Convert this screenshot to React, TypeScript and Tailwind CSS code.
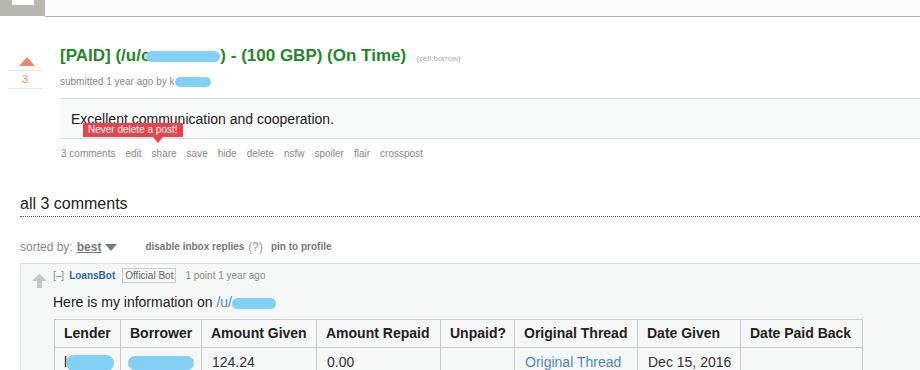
import React from "react";

const LINKS = ["3 comments", "edit", "share", "save", "hide", "delete", "nsfw", "spoiler", "flair", "crosspost"];

const COLUMNS: Array<{ label: string; width: string }> = [
  { label: "Lender", width: "w-[66px]" },
  { label: "Borrower", width: "w-[81px]" },
  { label: "Amount Given", width: "w-[115px]" },
  { label: "Amount Repaid", width: "w-[124px]" },
  { label: "Unpaid?", width: "w-[74px]" },
  { label: "Original Thread", width: "w-[123px]" },
  { label: "Date Given", width: "w-[103px]" },
  { label: "Date Paid Back", width: "w-[122px]" },
];

function Blob({ className }: { className: string }) {
  return <span className={`inline-block rounded-full bg-[#82d0f6] align-middle ${className}`} />;
}

function PostVote() {
  return (
    <div className="flex w-[60px] shrink-0 flex-col items-start pl-[8px] pt-[11px]">
      <svg width="16" height="9" viewBox="0 0 16 9" className="ml-[11px]">
        <polygon points="8,0 16,9 0,9" fill="#f2866a" />
      </svg>
      <div className="mt-[4px] h-[19px] w-[34px] border-y border-[#e6e6e6] text-center text-[11px] leading-[17px] text-[#e5896c]">
        3
      </div>
    </div>
  );
}

function CommentArrow() {
  return (
    <svg width="15" height="14" viewBox="0 0 15 14">
      <polygon points="7.5,0 15,7 10,7 10,14 5,14 5,7 0,7" fill="#c6c6c6" />
    </svg>
  );
}

export default function App() {
  return (
    <div className="h-[370px] w-[920px] overflow-hidden bg-white font-['Liberation_Sans',Arial,sans-serif] text-[#222]">
      {/* top bar */}
      <div className="flex h-[17px]">
        <div className="h-[16px] w-[45px] bg-[#b9b7b1] pl-[12px]">
          <div className="h-[5px] w-[22px] bg-white" />
        </div>
        <div className="h-[17px] flex-1 border-b border-[#b3b3b3] bg-[#fafafa]" />
      </div>

      {/* post */}
      <div className="mt-[29px] flex">
        <PostVote />
        <div className="relative flex-1">
          <div className="flex items-baseline">
            <span className="text-[17px] font-bold leading-[20px] text-[#23882a]">
              [PAID] (/u/c
              <Blob className="-ml-[4px] h-[11px] w-[74px]" />) - (100 GBP) (On Time)
            </span>
            <span className="ml-[10px] text-[8px] text-[#aaa]">(self.borrow)</span>
          </div>
          <div className="mt-[9px] text-[10px] leading-[14px] text-[#888]">
            submitted 1 year ago by k<Blob className="h-[10px] w-[36px]" />
          </div>
          <div className="mt-[9px] h-[41px] border-y border-[#dcdcdc] bg-[#f8f9f9] pl-[11px] pt-[11px] text-[14px] leading-[18px] text-[#222]">
            Excellent communication and cooperation.
          </div>
          <div className="mt-[8px] flex gap-[10px] pl-[1px] text-[10px] leading-[14px] text-[#888]">
            {LINKS.map((l) => (
              <span key={l}>{l}</span>
            ))}
          </div>
          {/* tooltip */}
          <div className="absolute left-[23px] top-[77px] flex flex-col items-start">
            <div className="h-[14px] bg-[#e8424c] px-[5px] text-[10px] leading-[14px] text-white">Never delete a post!</div>
            <svg width="10" height="6" viewBox="0 0 10 6" className="ml-[70px]">
              <polygon points="0,0 10,0 5,6" fill="#e8424c" />
            </svg>
          </div>
        </div>
      </div>

      {/* comments heading */}
      <div className="ml-[20px] mt-[33px] border-b border-dotted border-[#555] pb-[2px] text-[16px] leading-[20px] text-[#222]">
        all 3 comments
      </div>

      <div className="ml-[20px] mt-[22px] flex items-center text-[12px] leading-[16px]">
        <span className="text-[#888]">sorted by:</span>
        <span className="ml-[4px] font-bold text-[#777] underline">best</span>
        <svg width="12" height="7" viewBox="0 0 12 7" className="ml-[4px]">
          <polygon points="0,0 12,0 6,7" fill="#777" />
        </svg>
        <span className="ml-[28px] text-[10px] font-bold text-[#777]">disable inbox replies</span>
        <span className="ml-[4px] text-[12px] text-[#999]">(?)</span>
        <span className="ml-[8px] text-[10px] font-bold text-[#777]">pin to profile</span>
      </div>

      {/* comment */}
      <div className="ml-[20px] mt-[8px] flex h-[200px] border-l border-t border-[#e0e0e0] bg-[#f6f7f7]">
        <div className="w-[32px] shrink-0 pl-[11px] pt-[10px]">
          <CommentArrow />
        </div>
        <div className="flex-1 pt-[4px]">
          <div className="flex items-center text-[10px] leading-[14px]">
            <span className="text-[#888]">[–]</span>
            <span className="ml-[5px] font-bold text-[#336699]">LoansBot</span>
            <span className="ml-[7px] border border-[#ccc] px-[2px] leading-[13px] text-[#666]">Official Bot</span>
            <span className="ml-[9px] text-[#888]">1 point 1 year ago</span>
          </div>
          <div className="mt-[10px] text-[14px] leading-[18px] text-[#222]">
            Here is my information on <span className="text-[#4f86c6]">/u/</span>
            <Blob className="h-[11px] w-[44px]" />
          </div>
          <table className="mt-[8px] ml-[1px] w-[808px] table-fixed border-collapse text-[14px] text-[#222]">
            <thead>
              <tr className="h-[28px]">
                {COLUMNS.map((c) => (
                  <th key={c.label} className={`${c.width} border border-[#c8c8c8] pl-[9px] text-left font-bold`}>
                    {c.label}
                  </th>
                ))}
              </tr>
            </thead>
            <tbody>
              <tr className="h-[30px]">
                <td className="border border-[#c8c8c8] pl-[9px]">
                  l<Blob className="-ml-[1px] h-[16px] w-[48px]" />
                </td>
                <td className="border border-[#c8c8c8] pl-[7px]">
                  <Blob className="h-[14px] w-[66px]" />
                </td>
                <td className="border border-[#c8c8c8] pl-[10px] text-[#333]">124.24</td>
                <td className="border border-[#c8c8c8] pl-[10px] text-[#333]">0.00</td>
                <td className="border border-[#c8c8c8]" />
                <td className="border border-[#c8c8c8] pl-[10px] text-[#4f86c6]">Original Thread</td>
                <td className="border border-[#c8c8c8] pl-[10px] text-[#333]">Dec 15, 2016</td>
                <td className="border border-[#c8c8c8]" />
              </tr>
            </tbody>
          </table>
        </div>
      </div>
    </div>
  );
}
